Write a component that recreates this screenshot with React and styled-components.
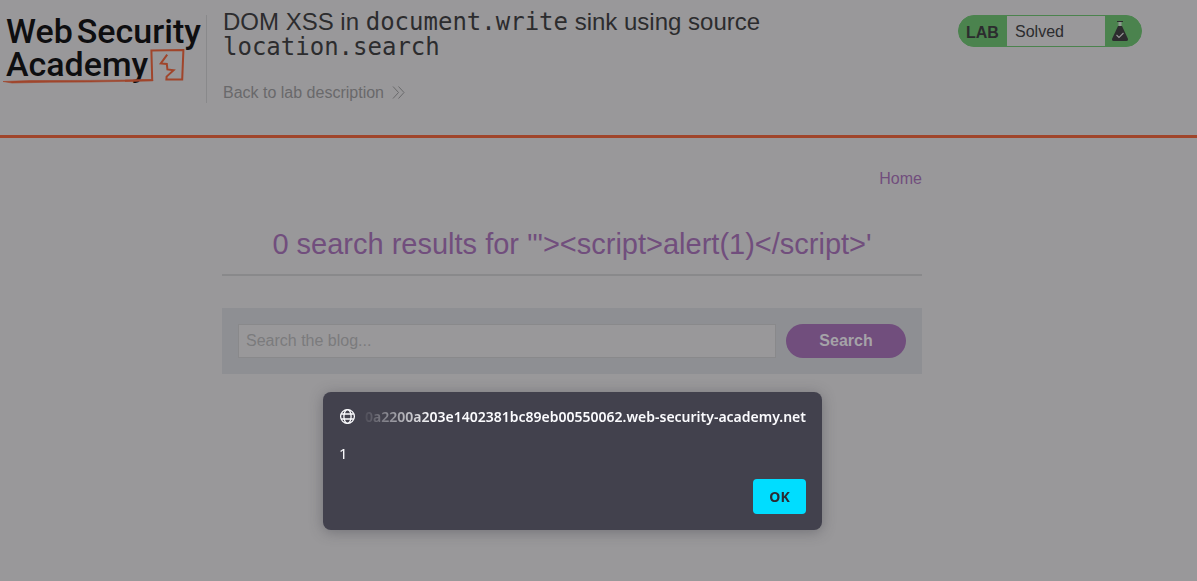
import React from 'react';
import styled, { createGlobalStyle } from 'styled-components';

const sans = '"Liberation Sans", Arial, sans-serif';
const c = {
  page: '#99989a',
  ink: '#2c2c2e',
  muted: '#69696b',
  orange: '#a0452b',
  green: '#4b834e',
  purple: '#714e7d',
  rule: '#89898b',
  panel: '#8e8f93',
  dialog: '#42414d',
};

const GlobalStyle = createGlobalStyle`
  *, *::before, *::after { box-sizing: border-box; }
  body { margin: 0; background: ${c.page}; color: ${c.ink}; font: 16px/20px ${sans}; }
`;

const Header = styled.header`
  display: flex;
  align-items: flex-start;
  min-height: 138px;
  padding: 9px 55px 0 0;
  border-bottom: 3px solid ${c.orange};
`;

const Logo = styled.a`
  display: block;
  position: relative;
  flex: none;
  width: 207px;
  height: 88px;
  margin-top: 6px;
  border-right: 1px solid ${c.rule};
  color: #0e0e10;
  text-decoration: none;
`;

const LogoArt = styled.svg`
  position: absolute;
  top: 0;
  left: 0;
`;

const LogoLine = styled.span`
  display: flex;
  gap: 4px;
  padding-left: 6px;
  font: 500 34px/33px Roboto, sans-serif;
  white-space: nowrap;
`;

const Intro = styled.div`
  flex: 1;
  min-width: 0;
  padding: 0 16px;
`;

const Title = styled.h1`
  max-width: 600px;
  margin: 0 0 24px;
  font-size: 24px;
  font-weight: 400;
  line-height: 25px;
`;

const Code = styled.code`
  font-family: "DejaVu Sans Mono", monospace;
  font-size: 24px;
  line-height: 20px;
`;

const BackLink = styled.a`
  display: inline-flex;
  align-items: center;
  gap: 8px;
  color: ${c.muted};
  text-decoration: none;
`;

const Status = styled.div`
  display: flex;
  flex: none;
  align-items: stretch;
  width: 184px;
  height: 32px;
  margin-top: 6px;
  overflow: hidden;
  border: 1px solid ${c.green};
  border-radius: 16px;
  background: ${c.green};
`;

const StatusTag = styled.strong`
  width: 48px;
  padding-left: 7px;
  line-height: 34px;
`;

const StatusText = styled.span`
  width: 98px;
  padding-left: 8px;
  background: ${c.page};
  line-height: 32px;
`;

const StatusIcon = styled.span`
  padding: 5px 0 0 6px;
`;

const Main = styled.main`
  max-width: 1144px;
  padding: 31px 16px 0;
`;

const Column = styled.div`
  max-width: 700px;
  margin: 0 auto;
`;

const Nav = styled.nav`
  display: flex;
  justify-content: flex-end;
`;

const NavLink = styled.a`
  color: ${c.purple};
  text-decoration: none;
`;

const Results = styled.h2`
  margin: 36px 0 32px;
  padding-bottom: 11px;
  border-bottom: 2px solid ${c.rule};
  color: ${c.purple};
  font-size: 29px;
  font-weight: 400;
  line-height: 38px;
  text-align: center;
`;

const SearchForm = styled.form`
  display: flex;
  gap: 10px;
  padding: 16px;
  background: ${c.panel};
`;

const SearchInput = styled.input`
  flex: 1;
  min-width: 0;
  height: 34px;
  padding: 0 7px;
  border: 1px solid ${c.rule};
  border-radius: 0;
  background: ${c.page};
  color: ${c.ink};
  font: 16px ${sans};
  &::placeholder { color: #7b7b7d; opacity: 1; }
`;

const SearchButton = styled.button`
  width: 120px;
  height: 34px;
  border: 0;
  border-radius: 17px;
  background: ${c.purple};
  color: #a5a3a8;
  font: 700 16px ${sans};
`;

const Backdrop = styled.div`
  position: fixed;
  inset: 0;
  display: flex;
  align-items: flex-end;
  justify-content: center;
  padding: 0 52px 51px 0;
`;

const Dialog = styled.dialog`
  position: static;
  width: 499px;
  margin: 0;
  padding: 16px;
  border: 0;
  border-radius: 8px;
  background: ${c.dialog};
  box-shadow: 0 2px 14px rgba(58, 57, 68, 0.4);
  color: #fbfbfe;
  font: 15px/18px "Noto Sans", sans-serif;
`;

const Origin = styled.div`
  display: flex;
  align-items: center;
  gap: 4px;
  svg { flex: none; }
`;

const Host = styled.div`
  display: flex;
  flex: 1;
  justify-content: flex-end;
  overflow: hidden;
  font-size: 14px;
  font-weight: 600;
  line-height: 17px;
  white-space: nowrap;
  mask-image: linear-gradient(to right, transparent, #000 72px);
`;

const Message = styled.p`
  margin: 19px 0 17px;
`;

const Actions = styled.div`
  display: flex;
  justify-content: flex-end;
`;

const OkButton = styled.button`
  width: 53px;
  height: 35px;
  padding: 0;
  border: 0;
  border-radius: 4px;
  background: #00ddff;
  color: #2b2a33;
  font: 700 14px "Noto Sans", sans-serif;
`;

export default function App() {
  return (
    <>
      <GlobalStyle />
      <Header>
        <Logo href="#academy">
          <LogoArt width="206" height="72" viewBox="0 0 206 72" fill="none" stroke={c.orange} aria-hidden="true">
            <path d="M3 66.5L30 65.6L90 65.4L152 64.8L153 65.8L90 67L50 67.2L12 68Z" fill={c.orange} strokeWidth="0.6" />
            <path d="M125 65.7L152.2 65L151.4 35.6L183.4 35L182.2 64.4L166.4 64.6L166.6 61.6L173.6 55.2L167.4 54.4L166.8 49L160.8 48.4L167.2 39.6" strokeWidth="2" />
          </LogoArt>
          <LogoLine><span>Web</span><span>Security</span></LogoLine>
          <LogoLine>Academy</LogoLine>
        </Logo>
        <Intro>
          <Title>
            DOM XSS in <Code>document.write</Code> sink using source <Code>location.search</Code>
          </Title>
          <BackLink href="#description">
            Back to lab description
            <svg width="14" height="14" viewBox="0 0 14 14" fill="none" stroke={c.muted} aria-hidden="true">
              <path d="M1 0.5L6.5 6.5L1 12.5M6.5 0.5L12 6.5L6.5 12.5" />
            </svg>
          </BackLink>
        </Intro>
        <Status>
          <StatusTag>LAB</StatusTag>
          <StatusText>Solved</StatusText>
          <StatusIcon>
            <svg width="18" height="20" viewBox="0 0 18 20" aria-hidden="true">
              <path d="M6 .5H12" fill="none" stroke={c.ink} />
              <path d="M7.5 1H10.5V5H7.5Z" fill="#8e9a90" />
              <path d="M7 5H11L17 18Q17.3 20 15.5 20H2.5Q.7 20 1 18Z" fill={c.ink} />
              <path d="M5.5 14L8 16.5L12.5 12" fill="none" stroke="#99989a" strokeWidth="1.1" />
            </svg>
          </StatusIcon>
        </Status>
      </Header>
      <Main>
        <Column>
          <Nav><NavLink href="#home">Home</NavLink></Nav>
          <Results>{`0 search results for '"><script>alert(1)</script>'`}</Results>
          <SearchForm onSubmit={(e) => e.preventDefault()}>
            <SearchInput type="text" aria-label="Search the blog" placeholder="Search the blog..." />
            <SearchButton type="submit">Search</SearchButton>
          </SearchForm>
        </Column>
      </Main>
      <Backdrop>
        <Dialog open aria-labelledby="origin">
          <Origin>
            <svg width="17" height="17" viewBox="0 0 17 17" fill="none" stroke="#fbfbfe" strokeWidth="1.3" aria-hidden="true">
              <circle cx="8.5" cy="8.5" r="6.9" />
              <ellipse cx="8.5" cy="8.5" rx="3.6" ry="6.9" />
              <path d="M2.2 6H14.8M2.2 11H14.8" />
            </svg>
            <Host id="origin">0a2200a203e1402381bc89eb00550062.web-security-academy.net</Host>
          </Origin>
          <Message>1</Message>
          <Actions><OkButton type="button">OK</OkButton></Actions>
        </Dialog>
      </Backdrop>
    </>
  );
}
